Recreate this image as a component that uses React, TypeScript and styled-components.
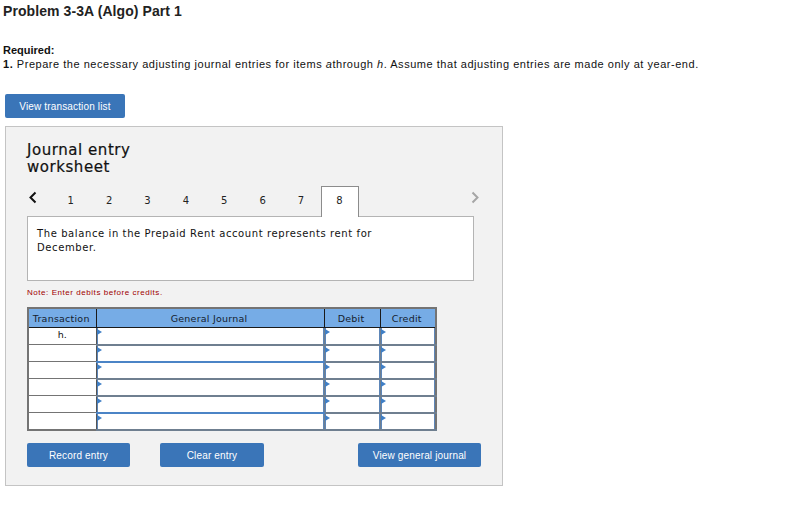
import React from 'react'
import styled, { createGlobalStyle } from 'styled-components'

const GlobalStyle = createGlobalStyle`
  html, body {
    margin: 0;
    padding: 0;
    background: #fff;
  }
`
const Page = styled.div`
  width: 794px;
  height: 513px;
  overflow: hidden;
  padding: 3px 0 0 3px;
  box-sizing: border-box;
  font-family: "DejaVu Sans", Verdana, sans-serif;
  color: #111;
`
const Title = styled.h1`
  margin: 0;
  font-family: "Liberation Sans", Arial, sans-serif;
  font-size: 14px;
  line-height: 16px;
  font-weight: 700;
  letter-spacing: 0.08px;
  color: #222;
`
const Required = styled.div`
  margin-top: 24px;
  font-family: "Liberation Sans", Arial, sans-serif;
  font-size: 11px;
  line-height: 14px;
  font-weight: 700;
`
const Instruction = styled.p`
  margin: 0;
  font-family: "Liberation Sans", Arial, sans-serif;
  font-size: 11px;
  line-height: 14px;
  letter-spacing: 0.53px;
  white-space: nowrap;
  b { font-weight: 700; }
  i { font-style: italic; }
`
const Button = styled.button`
  height: 24px;
  width: ${p => p.$w}px;
  padding: 1px 0 0;
  border: 0;
  border-radius: 2px;
  background: #3a75b8;
  color: #fff;
  font-family: "Liberation Sans", Arial, sans-serif;
  font-size: 10px;
  letter-spacing: 0.15px;
`
const TopButton = styled(Button)`
  display: block;
  margin: 23px 0 8px 2px;
  padding-top: 0;
`
const Panel = styled.section`
  width: 498px;
  height: 360px;
  margin-left: 2px;
  padding: 15px 21px 0;
  box-sizing: border-box;
  background: #f2f2f2;
  border: 1px solid #c4c4c4;
`
const Heading = styled.h2`
  margin: 0;
  width: 120px;
  font-size: 15px;
  line-height: 17px;
  font-weight: 400;
  letter-spacing: 0.55px;
  color: #111;
  -webkit-text-stroke: 0.2px #111;
`
const TabRow = styled.div`
  display: flex;
  align-items: stretch;
  height: 31px;
  margin-top: 10px;
  position: relative;
  z-index: 1;
`
const Arrow = styled.div`
  width: 25px;
  flex: none;
  display: flex;
  align-items: flex-start;
  padding: 5px 0 0 1px;
  box-sizing: border-box;
`
const NextArrow = styled(Arrow)`
  margin-left: auto;
  width: 11px;
  padding-left: 0;
`
const Tab = styled.div`
  width: 38.4px;
  box-sizing: border-box;
  display: flex;
  justify-content: center;
  padding: 8px 1px 0 0;
  font-size: 10px;
  line-height: 14px;
  color: #222;
  ${p =>
    p.$active &&
    `
    background: #fff;
    border: 1px solid #8c8c8c;
    border-bottom: 0;
    padding-top: 7px;
  `}
`
const Description = styled.div`
  width: 447px;
  height: 65px;
  margin-top: -1px;
  padding: 10px 90px 0 9px;
  box-sizing: border-box;
  background: #fff;
  border: 1px solid #b4b4b4;
  font-size: 10px;
  line-height: 14px;
  letter-spacing: 0.6px;
  color: #111;
`
const Note = styled.div`
  margin-top: 7px;
  font-family: "Liberation Sans", Arial, sans-serif;
  font-size: 8px;
  line-height: 10px;
  letter-spacing: 0.55px;
  color: #a00000;
`
const Table = styled.table`
  width: 410px;
  margin-top: 9px;
  table-layout: fixed;
  border-collapse: collapse;
  background: #fff;
  border: 2px solid #747474;
`
const HeadCell = styled.th`
  height: 18px;
  padding: 0 2px 0 0;
  background: #76ace6;
  border-left: 1px solid #1a1a1a;
  border-bottom: 1px solid #1a1a1a;
  font-size: 9.5px;
  font-weight: 400;
  letter-spacing: 0.22px;
  color: #14202e;
  &:first-child { border-left: 0; }
`
const TransCell = styled.td`
  padding: 0 0 3px;
  height: 17px;
  box-sizing: border-box;
  text-align: center;
  font-size: 9.5px;
  line-height: 10px;
  color: #111;
  border-bottom: 1px solid #747474;
  border-right: 1px solid #555;
`
const EntryCell = styled.td`
  position: relative;
  padding: 0;
  border: 1px solid ${p => (p.$blue ? '#4b84c6' : '#6f7f90')};
  border-width: 1px 1px 2px 1px;
  border-left-color: #5d82ad;
  border-right-color: #6f7f90;
  box-shadow: inset 1px 0 0 #5d86b8, inset -1px 0 0 #5d86b8;
  &::before {
    content: '';
    position: absolute;
    top: 1px;
    left: 0;
    border-left: 5px solid #3f7fc6;
    border-top: 3px solid transparent;
    border-bottom: 3px solid transparent;
  }
`
const Footer = styled.div`
  display: flex;
  margin-top: 12px;
`
const ClearButton = styled(Button)`
  margin-left: 30px;
`
const JournalButton = styled(Button)`
  margin-left: auto;
`

const rows = [
  { label: 'h.', blue: false },
  { label: '', blue: true },
  { label: '', blue: false },
  { label: '', blue: false },
  { label: '', blue: true },
  { label: '', blue: false },
]

const App = () => {
  return (
    <Page>
      <GlobalStyle />
      <Title>Problem 3-3A (Algo) Part 1</Title>
      <Required>Required:</Required>
      <Instruction>
        <b>1.</b> Prepare the necessary adjusting journal entries for items <i>a</i>through <i>h</i>. Assume that
        adjusting entries are made only at year-end.
      </Instruction>
      <TopButton $w={120}>View transaction list</TopButton>
      <Panel>
        <Heading>Journal entry worksheet</Heading>
        <TabRow>
          <Arrow>
            <svg width="10" height="14" viewBox="0 0 10 14">
              <path d="M7.5 1.5 2.5 6.5l5 5" fill="none" stroke="#111" strokeWidth="2" />
            </svg>
          </Arrow>
          {[1, 2, 3, 4, 5, 6, 7, 8].map(n => (
            <Tab key={n} $active={n === 8}>
              {n}
            </Tab>
          ))}
          <NextArrow>
            <svg width="10" height="14" viewBox="0 0 10 14">
              <path d="M2.5 1.5 7.5 6.5l-5 5" fill="none" stroke="#a6a6a6" strokeWidth="2" />
            </svg>
          </NextArrow>
        </TabRow>
        <Description>The balance in the Prepaid Rent account represents rent for December.</Description>
        <Note>Note: Enter debits before credits.</Note>
        <Table>
          <colgroup>
            <col width="68" />
            <col width="228" />
            <col width="56" />
            <col width="56" />
          </colgroup>
          <thead>
            <tr>
              <HeadCell>Transaction</HeadCell>
              <HeadCell>General Journal</HeadCell>
              <HeadCell>Debit</HeadCell>
              <HeadCell>Credit</HeadCell>
            </tr>
          </thead>
          <tbody>
            {rows.map((row, i) => (
              <tr key={i}>
                <TransCell>{row.label}</TransCell>
                <EntryCell $blue={row.blue} />
                <EntryCell />
                <EntryCell />
              </tr>
            ))}
          </tbody>
        </Table>
        <Footer>
          <Button $w={103}>Record entry</Button>
          <ClearButton $w={104}>Clear entry</ClearButton>
          <JournalButton $w={123}>View general journal</JournalButton>
        </Footer>
      </Panel>
    </Page>
  )
}

export default App
